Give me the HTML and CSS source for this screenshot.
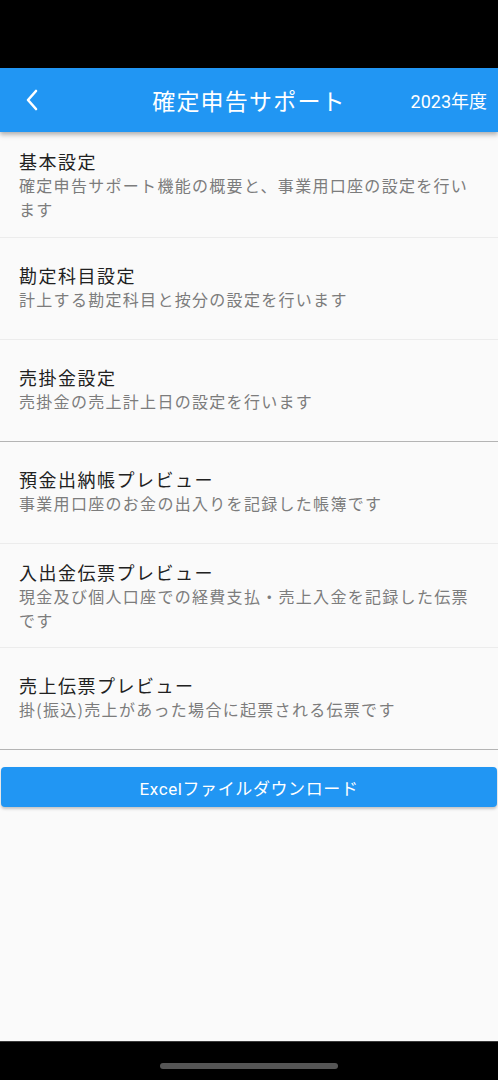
FILE: index.html
```html
<!DOCTYPE html>
<html lang="ja">
<head>
<meta charset="utf-8">
<link rel="stylesheet" href="styles.css">
</head>
<body>
<div class="screen">
  <div class="status-bar"></div>
  <header class="app-bar">
    <button class="back" aria-label="戻る">
      <svg width="16" height="24" viewBox="0 0 16 24"><path d="M12 3 L4 12 L12 21" fill="none" stroke="#fff" stroke-width="2.6" stroke-linecap="round" stroke-linejoin="round"/></svg>
    </button>
    <h1 class="title">確定申告サポート</h1>
    <span class="year">2023年度</span>
  </header>
  <main class="content">
    <ul class="list">
      <li class="item three first">
        <div class="item-title">基本設定</div>
        <div class="item-sub">確定申告サポート機能の概要と、事業用口座の設定を行います</div>
      </li>
      <li class="item">
        <div class="item-title">勘定科目設定</div>
        <div class="item-sub">計上する勘定科目と按分の設定を行います</div>
      </li>
      <li class="item">
        <div class="item-title">売掛金設定</div>
        <div class="item-sub">売掛金の売上計上日の設定を行います</div>
      </li>
    </ul>
    <hr class="section-divider">
    <ul class="list">
      <li class="item">
        <div class="item-title">預金出納帳プレビュー</div>
        <div class="item-sub">事業用口座のお金の出入りを記録した帳簿です</div>
      </li>
      <li class="item three">
        <div class="item-title">入出金伝票プレビュー</div>
        <div class="item-sub">現金及び個人口座での経費支払・売上入金を記録した伝票です</div>
      </li>
      <li class="item">
        <div class="item-title">売上伝票プレビュー</div>
        <div class="item-sub">掛(振込)売上があった場合に起票される伝票です</div>
      </li>
    </ul>
    <hr class="section-divider">
    <button class="download">Excelファイルダウンロード</button>
  </main>
  <footer class="nav-bar"><span class="home-indicator"></span></footer>
</div>
</body>
</html>
```

FILE: styles.css
```css
* { box-sizing: border-box; }
html, body { margin: 0; padding: 0; }
body {
  width: 498px;
  height: 1080px;
  background: #000;
  font-family: "Noto Sans CJK JP", Roboto, "Noto Sans", sans-serif;
  overflow: hidden;
}
.screen {
  display: flex;
  flex-direction: column;
  height: 1080px;
}
.status-bar {
  height: 68px;
  background: #000;
  flex: none;
}
.app-bar {
  position: relative;
  z-index: 2;
  height: 64px;
  flex: none;
  background: #2196f3;
  display: grid;
  grid-template-columns: 96px 1fr 96px;
  align-items: center;
  box-shadow: 0 2px 4px rgba(0,0,0,0.2), 0 4px 5px rgba(0,0,0,0.12);
  color: #fff;
}
.back {
  background: none;
  border: 0;
  padding: 0 0 0 24px;
  display: flex;
  align-items: center;
  height: 64px;
  cursor: pointer;
}
.title {
  margin: 0;
  font-size: 23px;
  font-weight: 400;
  letter-spacing: 1.2px;
  text-align: center;
  white-space: nowrap;
}
.year {
  font-family: Roboto, "Noto Sans CJK JP", sans-serif;
  font-size: 18px;
  text-align: right;
  padding-right: 11px;
  white-space: nowrap;
}
.content {
  flex: 1;
  background: #fafafa;
  display: flex;
  flex-direction: column;
}
.list {
  list-style: none;
  margin: 0;
  padding: 0;
}
.item {
  min-height: 102px;
  padding: 13px 19px 17px;
  display: flex;
  flex-direction: column;
  justify-content: center;
  border-bottom: 1px solid #ececec;
}
.item:last-child { border-bottom: 0; min-height: 101px; }
.item.three { min-height: 104px; padding-top: 15px; padding-bottom: 15px; }
.item.three.first { min-height: 106px; padding-top: 16px; padding-bottom: 16px; }
.item-title {
  font-size: 18px;
  line-height: 24px;
  letter-spacing: 1.5px;
  color: #212121;
}
.item-sub {
  font-size: 16px;
  line-height: 24px;
  letter-spacing: 1.3px;
  color: #7c7c7c;
  padding-right: 10px;
}
.section-divider {
  margin: 0;
  border: 0;
  height: 1px;
  background: #b4b4b4;
}
.download {
  margin: 17px 1px 0;
  height: 40px;
  border: 0;
  border-radius: 4px;
  background: #2196f3;
  color: #fff;
  font-family: Roboto, "Noto Sans CJK JP", sans-serif;
  font-size: 17px;
  font-weight: 400;
  letter-spacing: 0.6px;
  box-shadow: 0 2px 3px rgba(0,0,0,0.22);
  cursor: pointer;
}
.nav-bar {
  height: 39px;
  flex: none;
  background: #000;
  border-top: 1px solid #3a3a3a;
  display: flex;
  justify-content: center;
  padding-top: 21px;
}
.home-indicator {
  width: 178px;
  height: 6px;
  border-radius: 3px;
  background: #555;
}
```
